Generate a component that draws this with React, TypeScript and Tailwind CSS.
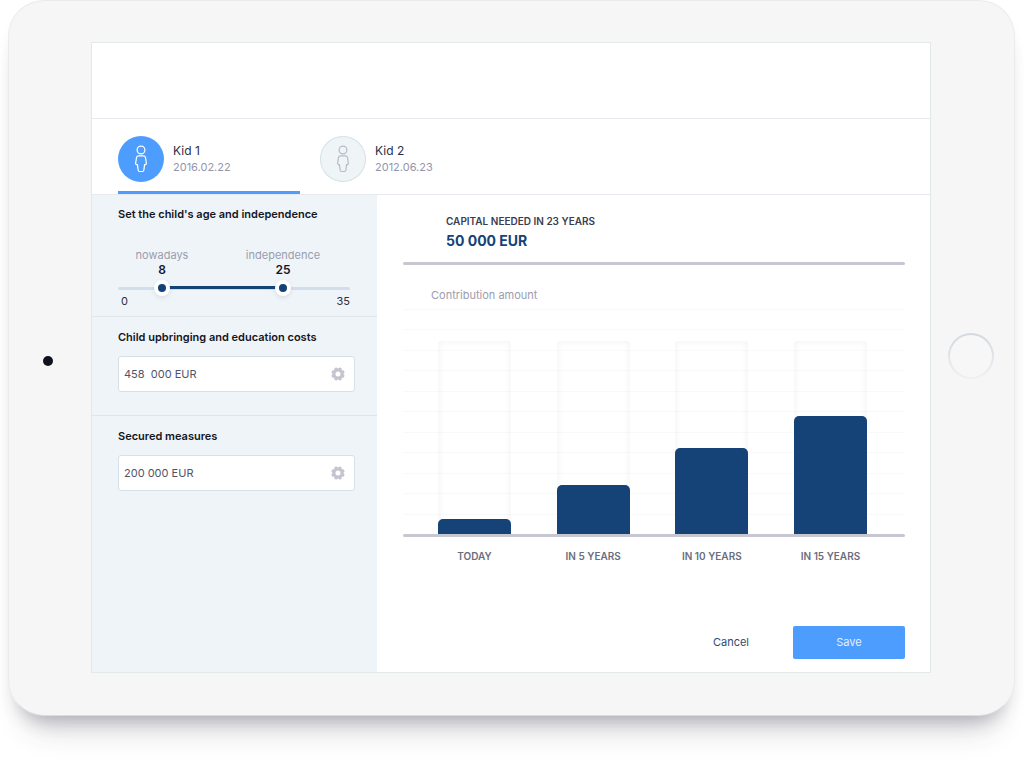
import { useState } from 'react';
import clsx from 'clsx';

const KIDS = [
  { id: 'kid-1', name: 'Kid 1', born: '2016.02.22' },
  { id: 'kid-2', name: 'Kid 2', born: '2012.06.23' },
];

const BARS = [
  { label: 'TODAY', value: 15 },
  { label: 'IN 5 YEARS', value: 49 },
  { label: 'IN 10 YEARS', value: 86 },
  { label: 'IN 15 YEARS', value: 118 },
];

const MAX_VALUE = 193;
const MAX_AGE = 35;
const GRID_ROWS = 11;

const rangeClass =
  'absolute inset-0 h-4 w-full appearance-none bg-transparent pointer-events-none outline-none [&::-webkit-slider-thumb]:pointer-events-auto [&::-webkit-slider-thumb]:size-4 [&::-webkit-slider-thumb]:appearance-none [&::-webkit-slider-thumb]:rounded-full [&::-webkit-slider-thumb]:border-4 [&::-webkit-slider-thumb]:border-white [&::-webkit-slider-thumb]:bg-[#154277] [&::-webkit-slider-thumb]:shadow-[0_2px_4px_rgba(60,80,110,0.12)]';

function ChildIcon() {
  return (
    <svg viewBox="0 0 46 46" className="size-full" fill="none" stroke="currentColor" strokeWidth="1.2" strokeLinejoin="round" aria-hidden="true">
      <circle cx="23" cy="14" r="3.9" />
      <path d="M20.600 19.800h4.800c1.200 0 1.900.7 2.100 1.900l.9 5.600c.1.8-.3 1.200-1.200 1.300l-.6.1-.8 5.600c-.1.9-.5 1.200-1.200 1.200h-3.200c-.7 0-1.100-.3-1.200-1.200l-.8-5.600-.6-.1c-.9-.1-1.300-.5-1.200-1.300l.9-5.600c.2-1.200.9-1.900 2.100-1.900z" />
    </svg>
  );
}

function GearIcon() {
  return (
    <svg viewBox="0 0 14 14" className="size-3.5 text-[#c4c5d0]" aria-hidden="true">
      <circle cx="7" cy="7" r="4.1" fill="none" stroke="currentColor" strokeWidth="3.2" />
      {[0, 45, 90, 135, 180, 225, 270, 315].map(a => (
        <rect key={a} x="5.5" y="0.3" width="3" height="2.4" rx="0.8" fill="currentColor" transform={`rotate(${a + 22.5} 7 7)`} />
      ))}
    </svg>
  );
}

function MoneyField({ id, label, initial }: { id: string; label: string; initial: string }) {
  const [value, setValue] = useState(initial);
  return (
    <div className="pl-[26px] pr-[22px] pt-2.5">
      <label htmlFor={id} className="block text-[11px] leading-5 font-semibold text-[#14161f]">{label}</label>
      <div className="mt-[9px] flex h-9 items-center rounded-[3px] border border-[#d5e0ea] bg-white pl-[5px] pr-[9px]">
        <input id={id} value={value} onChange={e => setValue(e.target.value)} className="min-w-0 flex-1 bg-transparent text-[11px] text-[#50546a] outline-none" />
        <button type="button" aria-label={`${label} settings`}><GearIcon /></button>
      </div>
    </div>
  );
}

function AgeSlider() {
  const [now, setNow] = useState(8);
  const [independent, setIndependent] = useState(25);

  // the thumb centre travels from 8px to (width - 8px)
  const pos = (v: number) => `calc(8px + (100% - 16px) * ${v / MAX_AGE})`;

  return (
    <div className="h-[122px] border-b border-[#dfe6ea] pl-[26px] pr-[27px] pt-[9px]">
      <h2 className="text-[11px] leading-5 font-semibold text-[#14161f]">Set the child&apos;s age and independence</h2>
      <div className="mt-6 flex gap-[41px] pl-1 text-center text-[11px] leading-[15px]">
        <label htmlFor="age-now" className="w-20 text-[#9b9dae]">
          nowadays
          <span className="block text-xs leading-[14px] font-semibold text-[#14161f]">{now}</span>
        </label>
        <label htmlFor="age-independent" className="w-20 text-[#9b9dae]">
          independence
          <span className="block text-xs leading-[14px] font-semibold text-[#14161f]">{independent}</span>
        </label>
      </div>
      <div className="relative mt-[3px] flex h-4 items-center">
        <div className="h-[3px] w-full rounded-full bg-[#d2deeb]" />
        <div className="absolute -left-[21px] -right-3 top-0 h-4">
          <div className="absolute top-[6px] h-[3px] bg-[#154277]" style={{ left: pos(now), right: `calc(100% - ${pos(independent)})` }} />
          <input id="age-now" type="range" min={0} max={MAX_AGE} value={now} onChange={e => setNow(Math.min(+e.target.value, independent))} className={rangeClass} />
          <input id="age-independent" type="range" min={0} max={MAX_AGE} value={independent} onChange={e => setIndependent(Math.max(+e.target.value, now))} className={rangeClass} />
        </div>
      </div>
      <div className="flex justify-between pl-[3px] text-[11px] leading-[10px] text-[#2b2f3f]">
        <span>0</span>
        <span>{MAX_AGE}</span>
      </div>
    </div>
  );
}

function Chart() {
  return (
    <figure className="mt-5">
      <figcaption className="pl-7 text-[11px] leading-5 text-[#9b9dae]">Contribution amount</figcaption>
      <div className="relative mt-1 h-[225px]">
        {/* Grid lines */}
        <div className="absolute inset-0 flex flex-col">
          {Array.from({ length: GRID_ROWS }, (_, i) => (
            <div key={i} className="flex-1 border-t border-[#f8fafa]" />
          ))}
        </div>
        <div className="relative flex h-full items-end justify-between pl-[35px] pr-[38px]">
          {BARS.map(bar => (
            <div key={bar.label} className="flex h-[193px] w-[73px] items-end rounded-t-[3px] shadow-[inset_0_0_7px_rgba(40,50,60,0.07)]">
              <div className="w-full rounded-t-[5px] bg-[#154277]" style={{ height: `${(bar.value / MAX_VALUE) * 100}%` }} />
            </div>
          ))}
        </div>
      </div>
      <div className="h-[3px] rounded-full bg-[#c6c7d1]" />
      <div className="mt-[11px] flex justify-between pl-[35px] pr-[38px] text-center text-[10px] leading-4 font-semibold text-[#6a6d80]">
        {BARS.map(bar => <span key={bar.label} className="w-[73px]">{bar.label}</span>)}
      </div>
    </figure>
  );
}

export default function App() {
  const [activeKid, setActiveKid] = useState('kid-1');

  return (
    <div className="min-h-screen overflow-hidden bg-white pl-2 pr-[9px] pb-16 font-['Inter',sans-serif]">
      {/* Tablet */}
      <div className="flex items-center rounded-[36px] border border-[#e9ebec] border-b-[#dcdce0] bg-[#f6f6f6] pt-[41px] pb-[42px] shadow-[0_32px_32px_-20px_rgba(50,50,70,0.2),0_14px_18px_-10px_rgba(50,50,70,0.3)]">
        <div className="flex w-[82px] shrink-0 justify-center pt-1.5 pr-1">
          <div className="size-2.5 rounded-full bg-[#10131d]" />
        </div>

        <main className="min-w-0 flex-1 border border-[#e3e8eb] bg-white">
          <div className="h-[76px] border-b border-[#e6eaee]" />

          <nav className="flex h-[76px] gap-5 border-b border-[#e6eaee] pl-[26px]">
            {KIDS.map(kid => {
              const active = kid.id === activeKid;
              return (
                <button key={kid.id} type="button" onClick={() => setActiveKid(kid.id)} className={clsx('flex w-[182px] items-center gap-[9px] border-b-[3px] pt-2 text-left', active ? 'border-[#4d9dff]' : 'border-transparent')}>
                  <span className={clsx('size-[46px] rounded-full', active ? 'bg-[#4d9dff] text-white' : 'bg-[#eff4f7] text-[#b6bac8] ring-1 ring-inset ring-[#d8e1e8]')}>
                    <ChildIcon />
                  </span>
                  <span className="text-[11px] leading-4 text-[#9496a8]">
                    <span className="block text-xs leading-4 text-[#2b2f3f]">{kid.name}</span>
                    {kid.born}
                  </span>
                </button>
              );
            })}
          </nav>

          <div className="flex">
            <aside className="w-[285px] shrink-0 bg-[#eff4f8]">
              <AgeSlider />
              <div className="h-[99px] border-b border-[#dfe6ea]">
                <MoneyField id="costs" label="Child upbringing and education costs" initial={'458\u00a0 000 EUR'} />
              </div>
              <MoneyField id="secured" label="Secured measures" initial="200 000 EUR" />
            </aside>

            <section className="min-w-0 flex-1 pl-[26px] pr-[25px] pt-[18px] pb-[13px]">
              <div className="pb-[11px] pl-[43px]">
                <h2 className="text-[10px] leading-4 font-semibold text-[#3a3d50]">CAPITAL NEEDED IN 23 YEARS</h2>
                <p className="mt-0.5 text-sm leading-5 font-bold text-[#154277]">50 000 EUR</p>
              </div>
              <div className="h-[3px] rounded-full bg-[#c6c7d1]" />

              <Chart />

              <div className="mt-[62px] flex justify-end gap-5">
                <button type="button" className="h-[33px] px-6 text-[11px] text-[#2f4a75]">Cancel</button>
                <button type="button" className="h-[33px] w-28 rounded-[2px] bg-[#4d9dff] text-[11px] text-[#e4f0ff]">Save</button>
              </div>
            </section>
          </div>
        </main>

        <div className="flex w-[83px] shrink-0 justify-center pb-1 pr-1">
          <button type="button" aria-label="Home" className="size-[46px] rounded-full bg-linear-to-b from-[#d3d8e0] to-[#eff1f1] p-0.5">
            <span className="block size-full rounded-full bg-[#f7f7f7]" />
          </button>
        </div>
      </div>
    </div>
  );
}
